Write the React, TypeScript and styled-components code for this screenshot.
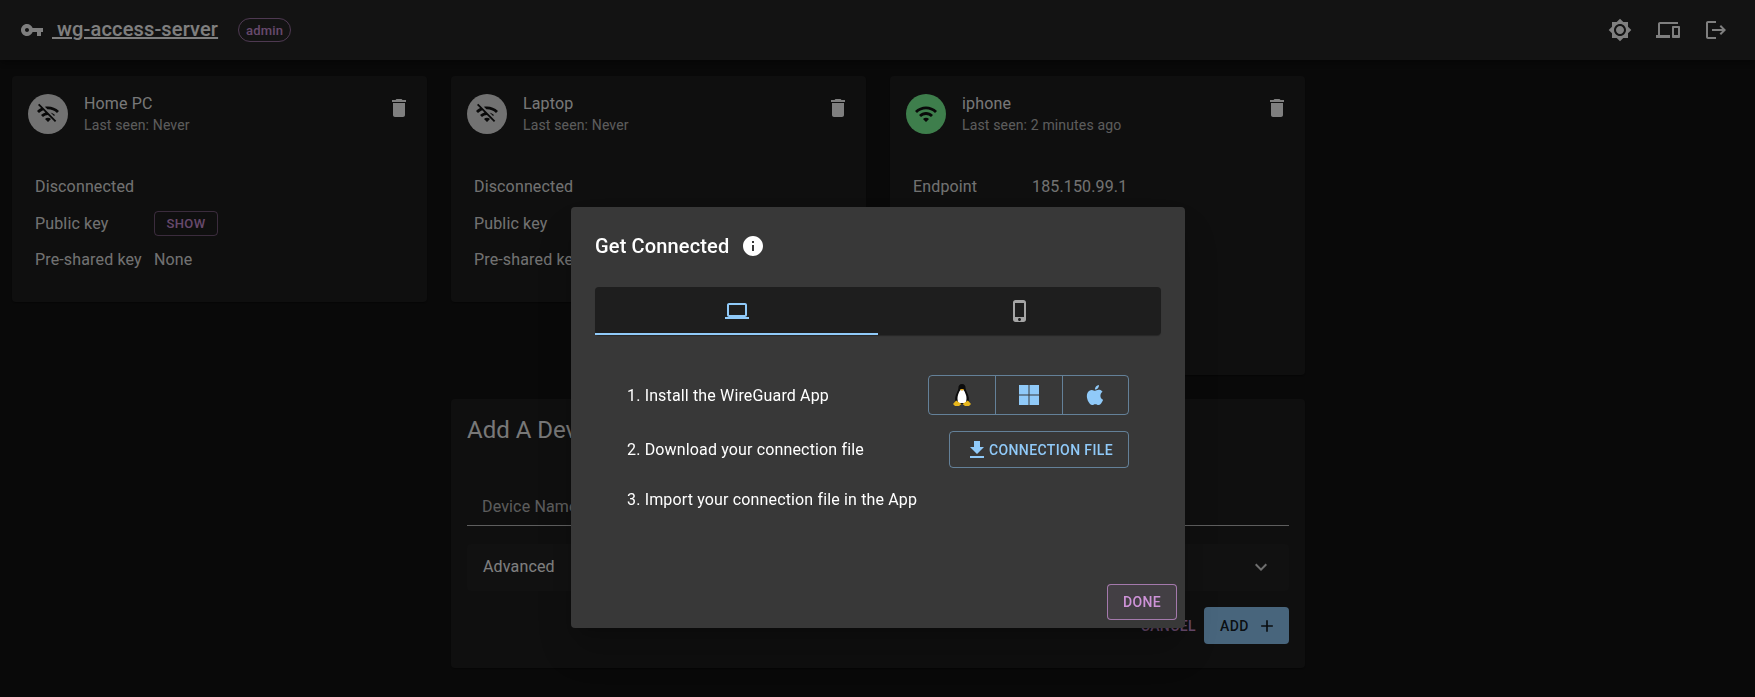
import styled, { createGlobalStyle } from 'styled-components';

const GlobalStyle = createGlobalStyle`
  html, body {
    margin: 0;
    height: 100%;
    overflow: hidden;
    background: #121212;
    color: #fff;
    font-family: Roboto, "Liberation Sans", sans-serif;
  }
  * {
    box-sizing: border-box;
  }
`;

const paths = {
  key: 'M12.65 10C11.83 7.67 9.61 6 7 6c-3.31 0-6 2.69-6 6s2.69 6 6 6c2.61 0 4.83-1.67 5.65-4H17v4h4v-4h2v-4H12.65zM7 14c-1.1 0-2-.9-2-2s.9-2 2-2 2 .9 2 2-.9 2-2 2z',
  wifi: 'M1 9l2 2c4.97-4.97 13.03-4.97 18 0l2-2C16.93 2.93 7.08 2.93 1 9zm8 8l3 3 3-3c-1.65-1.66-4.34-1.66-6 0zm-4-4l2 2c2.76-2.76 7.24-2.76 10 0l2-2C15.14 9.14 8.87 9.14 5 13z',
  wifiOff: 'M22.99 9C19.15 5.16 13.8 3.76 8.84 4.78l2.52 2.52c3.47-.17 6.99 1.05 9.63 3.7l2-2zm-4 4c-1.29-1.29-2.84-2.13-4.49-2.56l3.53 3.53.96-.97zM2 3.05L5.07 6.1C3.6 6.82 2.22 7.78 1 9l1.99 2c1.24-1.24 2.67-2.16 4.2-2.77l2.24 2.24C7.81 10.89 6.27 11.73 5 13v.01L6.99 15c1.36-1.36 3.14-2.04 4.92-2.06L18.98 20l1.27-1.26L3.29 1.79 2 3.05zM9 17l3 3 3-3c-1.65-1.66-4.34-1.66-6 0z',
  trash: 'M6 19c0 1.1.9 2 2 2h8c1.1 0 2-.9 2-2V7H6v12zM19 4h-3.5l-1-1h-5l-1 1H5v2h14V4z',
  info: 'M12 2C6.48 2 2 6.48 2 12s4.48 10 10 10 10-4.48 10-10S17.52 2 12 2zm1 15h-2v-6h2v6zm0-8h-2V7h2v2z',
  laptop: 'M20 18c1.1 0 2-.9 2-2V6c0-1.1-.9-2-2-2H4c-1.1 0-2 .9-2 2v10c0 1.1.9 2 2 2H0v2h24v-2h-4zM4 6h16v10H4V6z',
  phone: 'M15.5 1h-8C6.12 1 5 2.12 5 3.5v17C5 21.88 6.12 23 7.5 23h8c1.38 0 2.5-1.12 2.5-2.5v-17C18 2.12 16.88 1 15.5 1zm-4 21c-.83 0-1.5-.67-1.5-1.5s.67-1.5 1.5-1.5 1.5.67 1.5 1.5-.67 1.5-1.5 1.5zm4.5-4H7V4h9v14z',
  download: 'M19 9h-4V3H9v6H5l7 7 7-7zM5 18v2h14v-2H5z',
  brightness: 'M20 8.69V4h-4.69L12 .69 8.69 4H4v4.69L.69 12 4 15.31V20h4.69L12 23.31 15.31 20H20v-4.69L23.31 12 20 8.69zM12 18c-3.31 0-6-2.69-6-6s2.69-6 6-6 6 2.69 6 6-2.69 6-6 6zm0-10c-2.21 0-4 1.79-4 4s1.79 4 4 4 4-1.79 4-4-1.79-4-4-4z',
  devices: 'M4 6h18V4H4c-1.1 0-2 .9-2 2v11H0v3h14v-3H4V6zm19 2h-6c-.55 0-1 .45-1 1v10c0 .55.45 1 1 1h6c.55 0 1-.45 1-1V9c0-.55-.45-1-1-1zm-1 9h-4v-7h4v7z',
  logout: 'M17 7l-1.41 1.41L18.17 11H8v2h10.17l-2.58 2.58L17 17l5-5zM4 5h8V3H4c-1.1 0-2 .9-2 2v14c0 1.1.9 2 2 2h8v-2H4V5z',
  chevron: 'M16.59 8.59L12 13.17 7.41 8.59 6 10l6 6 6-6z',
  plus: 'M19 13h-6v6h-2v-6H5v-2h6V5h2v6h6v2z',
  apple: 'M18.71 19.5c-.83 1.24-1.71 2.45-3.05 2.47-1.34.03-1.77-.79-3.29-.79-1.53 0-2 .77-3.27.82-1.31.05-2.3-1.32-3.14-2.53C4.25 17 2.94 12.45 4.7 9.39c.87-1.52 2.43-2.48 4.12-2.51 1.28-.02 2.5.87 3.29.87.78 0 2.26-1.07 3.81-.91.65.03 2.47.26 3.64 1.98-.09.06-2.17 1.28-2.15 3.81.03 3.02 2.65 4.03 2.68 4.04-.03.07-.42 1.44-1.38 2.83M13 3.5c.73-.83 1.94-1.46 2.94-1.5.13 1.17-.34 2.35-1.04 3.19-.69.85-1.83 1.51-2.95 1.42-.15-1.15.41-2.35 1.05-3.11z',
};

const Icon = ({ name, size = 24 }: { name: keyof typeof paths; size?: number }) => (
  <svg width={size} height={size} viewBox='0 0 24 24' fill='currentColor' style={{ display: 'block', flexShrink: 0 }}>
    <path d={paths[name]} />
  </svg>
);

const Tux = () => (
  <svg width='20' height='24' viewBox='0 0 20 24' style={{ display: 'block' }}>
    <path d='M10 1C7.500 1 6.300 2.800 6.400 5.200 6.500 7.500 3.800 10.500 3.200 14.500 2.900 17 3.500 19.500 5 21h10c1.500-1.500 2.100-4 1.800-6.500-.6-4-3.300-7-3.200-9.300C13.700 2.800 12.500 1 10 1z' fill='#0c0c0c' />
    <path d='M10 6.500c-2.200 0-3 2.500-4 5.500-.7 2.300-.8 5 .3 8h7.400c1.100-3 1-5.700.3-8-1-3-1.800-5.500-4-5.500z' fill='#fff' />
    <path d='M7.800 6h4.400L10 8z' fill='#e8a91c' />
    <path d='M1 21l3.200-3.500L9.500 21 7 23H3zM19 21l-3.200-3.500L10.500 21l2.500 2h4z' fill='#e8b71c' />
  </svg>
);

const WindowsLogo = () => (
  <svg width='20' height='20' viewBox='0 0 20 20' fill='#90caf9' style={{ display: 'block' }}>
    <rect x='0' y='0' width='9.500' height='9.500' />
    <rect x='10.500' y='0' width='9.500' height='9.500' />
    <rect x='0' y='10.500' width='9.500' height='9.500' />
    <rect x='10.500' y='10.500' width='9.500' height='9.500' />
  </svg>
);

const DeviceCard = ({
  name,
  seen,
  online,
  rows,
}: {
  name: string;
  seen: string;
  online?: boolean;
  rows: { label: string; value?: string; show?: boolean }[];
}) => (
  <Card>
    <CardHeader>
      <Avatar $online={online}>
        <Icon name={online ? 'wifi' : 'wifiOff'} />
      </Avatar>
      <CardTitles>
        <DeviceName>{name}</DeviceName>
        <LastSeen>{seen}</LastSeen>
      </CardTitles>
      <TrashButton>
        <Icon name='trash' />
      </TrashButton>
    </CardHeader>
    <InfoTable>
      {rows.map((row) => (
        <InfoRow key={row.label}>
          <InfoLabel>{row.label}</InfoLabel>
          {row.value && <InfoValue>{row.value}</InfoValue>}
          {row.show && <ShowButton>Show</ShowButton>}
        </InfoRow>
      ))}
    </InfoTable>
  </Card>
);

const offlineRows = [
  { label: 'Disconnected' },
  { label: 'Public key', show: true },
  { label: 'Pre-shared key', value: 'None' },
];

const App = () => {
  return (
    <>
      <GlobalStyle />
      <Header>
        <KeyMark>
          <Icon name='key' />
        </KeyMark>
        <Title>{'\u00a0wg-access-server'}</Title>
        <RoleChip>admin</RoleChip>
        <HeaderActions>
          <HeaderIcon>
            <Icon name='brightness' />
          </HeaderIcon>
          <HeaderIcon>
            <Icon name='devices' />
          </HeaderIcon>
          <HeaderIcon>
            <Icon name='logout' />
          </HeaderIcon>
        </HeaderActions>
      </Header>

      <DeviceGrid>
        <DeviceCard name='Home PC' seen='Last seen: Never' rows={offlineRows} />
        <DeviceCard name='Laptop' seen='Last seen: Never' rows={offlineRows} />
        <DeviceCard
          name='iphone'
          seen='Last seen: 2 minutes ago'
          online
          rows={[
            { label: 'Endpoint', value: '185.150.99.1' },
            { label: 'Download' },
            { label: 'Upload' },
            { label: 'Public key', show: true },
            { label: 'Pre-shared key', value: 'None' },
          ]}
        />
        <AddCard>
          <AddTitle>Add A Device</AddTitle>
          <NameField>Device Name</NameField>
          <Advanced>
            <span>Advanced</span>
            <Icon name='chevron' />
          </Advanced>
          <AddActions>
            <CancelButton>Cancel</CancelButton>
            <AddButton>
              Add
              <Icon name='plus' />
            </AddButton>
          </AddActions>
        </AddCard>
      </DeviceGrid>

      <Backdrop>
        <Dialog>
          <DialogTitle>
            Get Connected
            <InfoMark>
              <Icon name='info' />
            </InfoMark>
          </DialogTitle>
          <Tabs>
            <Tab $active>
              <Icon name='laptop' />
            </Tab>
            <Tab>
              <Icon name='phone' />
            </Tab>
          </Tabs>
          <Steps>
            <Step>
              <span>1. Install the WireGuard App</span>
              <PlatformGroup>
                <PlatformButton>
                  <Tux />
                </PlatformButton>
                <PlatformButton>
                  <WindowsLogo />
                </PlatformButton>
                <PlatformButton>
                  <Icon name='apple' />
                </PlatformButton>
              </PlatformGroup>
            </Step>
            <Step>
              <span>2. Download your connection file</span>
              <DownloadButton>
                <Icon name='download' />
                Connection File
              </DownloadButton>
            </Step>
            <LastStep>3. Import your connection file in the App</LastStep>
          </Steps>
          <DialogActions>
            <DoneButton>Done</DoneButton>
          </DialogActions>
        </Dialog>
      </Backdrop>
    </>
  );
};

export default App;

const Header = styled.header`
  display: flex;
  align-items: center;
  height: 60px;
  padding: 0 15px 0 20px;
  background: #272727;
  box-shadow: 0 2px 4px -1px rgba(0, 0, 0, 0.2), 0 4px 5px 0 rgba(0, 0, 0, 0.14);
`;
const KeyMark = styled.div`
  color: #fff;
  margin-right: 8px;
`;
const Title = styled.h1`
  margin: 0 0 2px;
  font-size: 20px;
  font-weight: 500;
  line-height: 1.6;
  letter-spacing: 0.15px;
  color: #fff;
  text-decoration: underline;
`;
const RoleChip = styled.div`
  display: flex;
  align-items: center;
  height: 24px;
  margin-left: 20px;
  padding: 0 7px;
  font-size: 13px;
  font-weight: 500;
  letter-spacing: 0.2px;
  color: #ce93d8;
  border: 1px solid rgba(206, 147, 216, 0.7);
  border-radius: 12px;
`;
const HeaderActions = styled.div`
  display: flex;
  margin-left: auto;
`;
const HeaderIcon = styled.div`
  padding: 12px;
  color: #fff;
`;

const DeviceGrid = styled.main`
  display: grid;
  grid-template-columns: repeat(4, 415px);
  gap: 24px;
  align-items: start;
  padding: 16px 12px;
`;
const Card = styled.section`
  background: #1e1e1e;
  border-radius: 4px;
  box-shadow: 0 2px 1px -1px rgba(0, 0, 0, 0.2), 0 1px 1px 0 rgba(0, 0, 0, 0.14);
`;
const CardHeader = styled.div`
  display: flex;
  align-items: flex-start;
  padding: 18px 16px 0;
`;
const Avatar = styled.div<{ $online?: boolean }>`
  display: flex;
  align-items: center;
  justify-content: center;
  width: 40px;
  height: 40px;
  margin-right: 16px;
  border-radius: 50%;
  color: #121212;
  background: ${(props) => (props.$online ? '#7cfc98' : '#e4e4e4')};
`;
const CardTitles = styled.div`
  flex: 1;
`;
const DeviceName = styled.div`
  font-size: 16px;
  line-height: 20px;
  letter-spacing: 0.15px;
  color: rgba(255, 255, 255, 0.95);
`;
const LastSeen = styled.div`
  margin-top: 1px;
  font-size: 14px;
  line-height: 20px;
  letter-spacing: 0.15px;
  color: rgba(255, 255, 255, 0.7);
`;
const TrashButton = styled.div`
  margin: 2px 0 0;
  color: #fff;
`;
const InfoTable = styled.div`
  padding: 33.500px 23px 24px;
`;
const InfoRow = styled.div`
  display: grid;
  grid-template-columns: 119px 1fr;
  align-items: center;
  height: 36.500px;
  font-size: 16px;
  letter-spacing: 0.15px;
  color: rgba(255, 255, 255, 0.9);
`;
const InfoLabel = styled.span`
  white-space: nowrap;
`;
const InfoValue = styled.span``;
const ShowButton = styled.button`
  width: 64px;
  height: 25px;
  padding: 0;
  font-family: inherit;
  font-size: 13px;
  font-weight: 500;
  letter-spacing: 0.4px;
  text-transform: uppercase;
  color: #ce93d8;
  background: transparent;
  border: 1px solid rgba(206, 147, 216, 0.5);
  border-radius: 4px;
`;

const AddCard = styled(Card)`
  grid-column: 2 / 4;
  display: flex;
  flex-direction: column;
  height: 269px;
  padding: 15px 16px 16px;
`;
const AddTitle = styled.h2`
  margin: 0;
  font-size: 24px;
  font-weight: 400;
  line-height: 32px;
  color: rgba(255, 255, 255, 0.95);
`;
const NameField = styled.div`
  height: 47px;
  margin-top: 33px;
  padding: 16px 15px 0;
  font-size: 16px;
  line-height: 24px;
  letter-spacing: 0.15px;
  color: rgba(255, 255, 255, 0.7);
  border-bottom: 1px solid rgba(255, 255, 255, 0.7);
`;
const Advanced = styled.div`
  display: flex;
  align-items: center;
  justify-content: space-between;
  height: 47px;
  margin-top: 18px;
  padding: 0 16px 2px;
  font-size: 16px;
  letter-spacing: 0.15px;
  color: #fff;
  background: #232323;
  border-radius: 4px;
  svg {
    color: rgba(255, 255, 255, 0.85);
  }
`;
const AddActions = styled.div`
  display: flex;
  align-items: center;
  justify-content: flex-end;
  margin-top: 16px;
`;
const CancelButton = styled.button`
  margin-right: 8px;
  padding: 0;
  font-family: inherit;
  font-size: 14px;
  font-weight: 500;
  letter-spacing: 0.4px;
  text-transform: uppercase;
  color: #ce93d8;
  background: transparent;
  border: 0;
`;
const AddButton = styled.button`
  display: flex;
  align-items: center;
  gap: 8px;
  width: 85px;
  height: 37px;
  padding: 0 8px 0 16px;
  font-family: inherit;
  font-size: 14px;
  font-weight: 500;
  letter-spacing: 0.4px;
  text-transform: uppercase;
  color: rgba(0, 0, 0, 0.87);
  background: #90caf9;
  border: 0;
  border-radius: 4px;
  svg {
    width: 20px;
    height: 20px;
  }
`;

const Backdrop = styled.div`
  position: fixed;
  inset: 0;
  display: flex;
  justify-content: center;
  align-items: flex-start;
  padding: 207px 0 0 1px;
  background: rgba(0, 0, 0, 0.5);
`;
const Dialog = styled.div`
  display: flex;
  flex-direction: column;
  width: 614px;
  height: 421px;
  padding: 25px 24px 8px;
  background: #383838;
  border-radius: 4px;
  box-shadow: 0 11px 15px -7px rgba(0, 0, 0, 0.2), 0 24px 38px 3px rgba(0, 0, 0, 0.14);
`;
const DialogTitle = styled.h2`
  display: flex;
  align-items: center;
  height: 28px;
  margin: 0;
  font-size: 20px;
  font-weight: 500;
  letter-spacing: 0.15px;
  color: #fff;
`;
const InfoMark = styled.span`
  margin-left: 12px;
  color: #fff;
`;
const Tabs = styled.div`
  display: grid;
  grid-template-columns: 1fr 1fr;
  height: 48px;
  margin-top: 27px;
  background: #1e1e1e;
  border-radius: 4px;
  box-shadow: 0 2px 1px -1px rgba(0, 0, 0, 0.2), 0 1px 1px 0 rgba(0, 0, 0, 0.14);
`;
const Tab = styled.div<{ $active?: boolean }>`
  display: flex;
  align-items: center;
  justify-content: center;
  padding-top: 2px;
  color: ${(props) => (props.$active ? '#90caf9' : 'rgba(255, 255, 255, 0.6)')};
  border-bottom: 2px solid ${(props) => (props.$active ? '#90caf9' : 'transparent')};
`;
const Steps = styled.div`
  display: flex;
  flex-direction: column;
  gap: 16px;
  margin-top: 40px;
  padding: 0 32px;
  font-size: 16px;
  letter-spacing: 0.15px;
  color: #fff;
`;
const Step = styled.div`
  display: flex;
  align-items: center;
  justify-content: space-between;
`;
const LastStep = styled.div`
  margin-top: 4px;
  line-height: 24px;
`;
const PlatformGroup = styled.div`
  display: flex;
  height: 40px;
  border: 1px solid rgba(144, 202, 249, 0.5);
  border-radius: 4px;
`;
const PlatformButton = styled.div`
  display: flex;
  align-items: center;
  justify-content: center;
  width: 66.500px;
  color: #90caf9;
  & + & {
    border-left: 1px solid rgba(144, 202, 249, 0.5);
  }
`;
const DownloadButton = styled.button`
  display: flex;
  align-items: center;
  justify-content: center;
  width: 180px;
  height: 37px;
  padding: 0;
  font-family: inherit;
  font-size: 14px;
  font-weight: 500;
  letter-spacing: 0.4px;
  text-transform: uppercase;
  color: #90caf9;
  background: transparent;
  border: 1px solid rgba(144, 202, 249, 0.5);
  border-radius: 4px;
`;
const DialogActions = styled.div`
  display: flex;
  justify-content: flex-end;
  margin: auto -16px 0 0;
`;
const DoneButton = styled.button`
  width: 70px;
  height: 36px;
  padding: 0;
  font-family: inherit;
  font-size: 14px;
  font-weight: 500;
  letter-spacing: 0.4px;
  text-transform: uppercase;
  color: #ce93d8;
  background: rgba(206, 147, 216, 0.08);
  border: 1px solid rgba(206, 147, 216, 0.7);
  border-radius: 4px;
`;
